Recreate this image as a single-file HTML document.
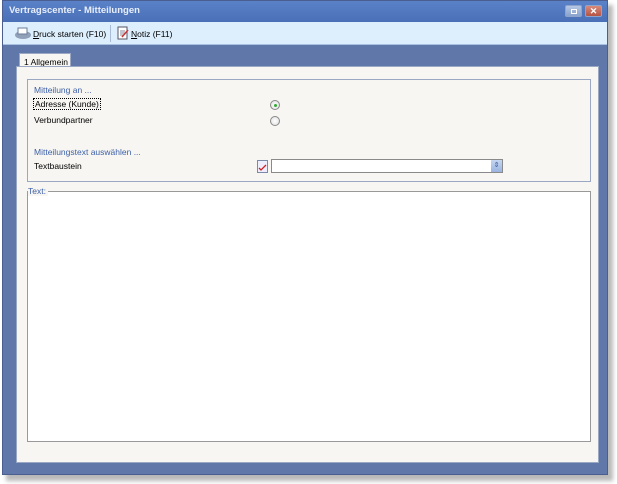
<!DOCTYPE html>
<html><head><meta charset="utf-8"><style>
*{margin:0;padding:0;box-sizing:border-box}
body{width:617px;height:484px;background:#fff;font-family:"Liberation Sans",sans-serif;font-size:9px;position:relative;overflow:hidden}
.shadow{position:absolute;left:6px;top:5px;width:607px;height:476px;background:#8a8a8a;opacity:.6;filter:blur(2px)}
.win{position:absolute;left:2px;top:0;width:606px;height:475px;background:#6077aa;border:1px solid #4a5f90}
.title{position:absolute;left:0;top:0;width:604px;height:21px;background:linear-gradient(#5a82c8,#4a70b8);color:#e8eefa;font-weight:bold;font-size:9.5px;padding:4px 0 0 6px}
.btn{position:absolute;top:4px;width:17px;height:12px;border:1px solid #8ea4cc;border-radius:2px}
.tb{position:absolute;left:0;top:21px;width:604px;height:23px;background:#ddeefc;border-bottom:1px solid #a9c1e0}
.tb span{position:absolute;top:7px;color:#000;font-size:8.5px}
.panel{position:absolute;left:13px;top:65px;width:583px;height:397px;background:#f7f6f2;border:1px solid #9aa8c4}
.tab{position:absolute;left:16px;top:52px;width:52px;height:15px;background:#f7f6f2;border:1px solid #9aa8c4;border-bottom:none;font-size:8.5px;padding:3px 0 0 4px}
.grp{position:absolute;left:10px;top:12px;width:564px;height:103px;border:1px solid #9aa8c4}
.lbl{position:absolute;color:#3c5fa8;font-size:8.5px}
.t{position:absolute;color:#000;font-size:8.5px}
.radio{position:absolute;width:10px;height:10px;border-radius:50%;border:1px solid #888;background:radial-gradient(#fff,#ddd)}
.txt{position:absolute;left:10px;top:124px;width:564px;height:251px;border:1px solid #999;background:#fff}
</style></head><body>
<div class="shadow"></div>
<div class="win">
<div class="title">Vertragscenter - Mitteilungen
<div class="btn" style="left:562px;background:linear-gradient(#b7c7e4,#8aa2cd)"><div style="position:absolute;left:5px;top:3px;width:6px;height:5px;border:1px solid #fff"></div></div>
<div class="btn" style="left:582px;background:linear-gradient(#d98a7a,#b55444);color:#fff;font-size:9px;text-align:center;line-height:10px">✕</div>
</div>
<div class="tb">
<svg style="position:absolute;left:11px;top:4px" width="18" height="14"><ellipse cx="9" cy="9" rx="8" ry="4" fill="#8fa0b8"/><rect x="4" y="2" width="9" height="6" fill="#fff" stroke="#6b7d99"/></svg>
<span style="left:30px"><u>D</u>ruck starten (F10)</span>
<div style="position:absolute;left:107px;top:3px;width:1px;height:17px;background:#a9bbd5"></div>
<svg style="position:absolute;left:114px;top:4px" width="12" height="14"><rect x="1" y="1" width="9" height="12" fill="#fff" stroke="#556"/><path d="M3 5h5M3 7h5M3 9h4" stroke="#889"/><path d="M5 11l6-7" stroke="#c33" stroke-width="1.5"/></svg>
<span style="left:128px"><u>N</u>otiz (F11)</span>
</div>
<div class="tab">1 Allgemein</div>
<div class="panel">
<div class="grp">
<div class="lbl" style="left:6px;top:5px">Mitteilung an ...</div>
<div class="t" style="left:5px;top:18px;border:1px dotted #000;padding:0 1px">Adresse (Kunde)</div>
<div class="t" style="left:6px;top:35px">Verbundpartner</div>
<div class="radio" style="left:242px;top:20px"><div style="position:absolute;left:2.5px;top:2.5px;width:3px;height:3px;border-radius:50%;background:#3a3"></div></div>
<div class="radio" style="left:242px;top:36px"></div>
<div class="lbl" style="left:6px;top:67px">Mitteilungstext auswählen ...</div>
<div class="t" style="left:6px;top:81px">Textbaustein</div>
<svg style="position:absolute;left:229px;top:80px" width="11" height="13"><rect x=".5" y=".5" width="10" height="12" fill="#eef" stroke="#7a8aa8"/><path d="M2 8l2 2 5-5" stroke="#c22" fill="none" stroke-width="1.3"/></svg>
<div style="position:absolute;left:243px;top:79px;width:232px;height:14px;border:1px solid #8a8a8a;background:#fff">
<div style="position:absolute;right:0;top:0;width:11px;height:12px;background:linear-gradient(#c6d6f0,#9ab4e0);color:#3a5a9a;font-size:7px;text-align:center;line-height:12px">⇕</div></div>
</div>
<div class="txt"></div>
<div style="position:absolute;left:11px;top:119px;background:#f7f6f2;padding:0 2px 0 0;color:#3c5fa8;font-size:8.5px">Text:</div>
</div>
</div>
</body></html>
